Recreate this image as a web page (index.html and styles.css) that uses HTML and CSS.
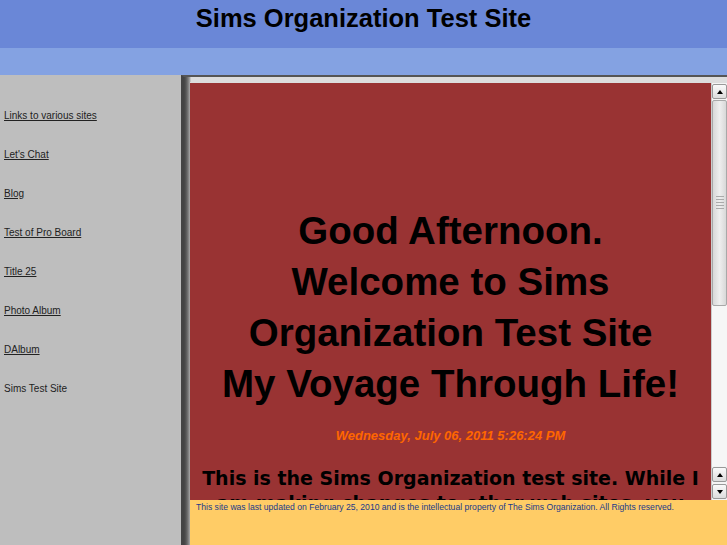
FILE: index.html
```html
<!DOCTYPE html>
<html>
<head>
<meta charset="utf-8">
<link rel="stylesheet" href="styles.css">
</head>
<body>
<div class="page">
  <header class="top">
    <h1 class="site-title">Sims Organization Test Site</h1>
  </header>
  <div class="band"></div>
  <div class="body-row">
    <nav class="side">
      <a class="nav-link" href="#">Links to various sites </a>
      <a class="nav-link" href="#">Let's Chat</a>
      <a class="nav-link" href="#">Blog</a>
      <a class="nav-link" href="#">Test of Pro Board</a>
      <a class="nav-link" href="#">Title 25</a>
      <a class="nav-link" href="#">Photo Album </a>
      <a class="nav-link" href="#">DAlbum</a>
      <span class="nav-link plain">Sims Test Site</span>
    </nav>
    <div class="frame">
      <div class="frame-inner">
        <div class="viewport">
          <main class="content">
            <div class="greeting">
              <p>Good Afternoon.</p>
              <p>Welcome to Sims</p>
              <p>Organization Test Site</p>
              <p>My Voyage Through Life!</p>
            </div>
            <p class="date">Wednesday, July 06, 2011 5:26:24 PM</p>
            <p class="intro">This is the Sims Organization test site. While I am making changes to other web sites, you may see some things here that are not yet finished.</p>
          </main>
          <div class="scrollbar">
            <div class="sb-btn"><span class="arr up"></span></div>
            <div class="sb-track">
              <div class="sb-thumb"><span class="grip"></span></div>
            </div>
            <div class="sb-btn"><span class="arr up"></span></div>
            <div class="sb-btn"><span class="arr down"></span></div>
          </div>
        </div>
        <footer class="foot">
          <p class="foot-text">This site was last updated on February 25, 2010 and is the intellectual property of The Sims Organization. All Rights reserved.</p>
        </footer>
      </div>
    </div>
  </div>
</div>
</body>
</html>
```
FILE: styles.css
```css
html, body {
  margin: 0;
  padding: 0;
  height: 100%;
  overflow: hidden;
}
body {
  font-family: "Liberation Sans", Arial, sans-serif;
  background: #bebebe;
}
.page {
  display: flex;
  flex-direction: column;
  height: 545px;
}
.top {
  height: 48px;
  background: #6a87d7;
  display: flex;
  justify-content: center;
}
.site-title {
  margin: 0;
  padding-top: 4px;
  font-size: 25.5px;
  line-height: 29px;
  font-weight: bold;
  color: #000;
}
.band {
  height: 27px;
  background: #84a2e2;
}
.body-row {
  flex: 1;
  display: flex;
  min-height: 0;
}
.side {
  width: 177px;
  padding: 35px 0 0 4px;
  background: #bebebe;
  display: flex;
  flex-direction: column;
  gap: 27px;
}
.nav-link {
  font-size: 10px;
  line-height: 12px;
  color: #222;
  text-decoration: underline;
}
.nav-link.plain {
  text-decoration: none;
}
.frame {
  flex: 1;
  display: flex;
  border-left: 3px solid #444;
  border-top: 2px solid #555;
  background: linear-gradient(90deg, #444 0, #555 2px, #777 4px, #aaa 6px, #ddd 7px);
  padding-left: 7px;
  padding-top: 5px;
  min-width: 0;
}
.frame-inner {
  flex: 1;
  display: flex;
  flex-direction: column;
  min-width: 0;
  border-top: 1px solid #ddd;
  margin-left: -1px;
}
.viewport {
  height: 417px;
  display: flex;
  background: #993333;
}
.content {
  flex: 1;
  overflow: hidden;
  text-align: center;
  color: #000;
  padding-top: 122px;
}
.greeting p {
  margin: 0;
  font-size: 38.5px;
  line-height: 51px;
  font-weight: bold;
  white-space: nowrap;
}
.date {
  margin: 19px 0 0;
  font-size: 13px;
  font-weight: bold;
  font-style: italic;
  color: #ff6600;
}
.intro {
  margin: 23px 12px 0;
  font-family: "DejaVu Sans", Verdana, sans-serif;
  font-size: 19px;
  line-height: 25px;
  font-weight: bold;
}
.scrollbar {
  width: 15px;
  display: flex;
  flex-direction: column;
  background: #f4f4f4;
  border-left: 1px solid #ccc;
}
.sb-btn {
  height: 13px;
  margin: 1px 0;
  border: 1px solid #999;
  border-radius: 2px;
  background: linear-gradient(#fafafa, #dcdcdc);
  display: flex;
  align-items: center;
  justify-content: center;
}
.arr {
  width: 0;
  height: 0;
  border-left: 3px solid transparent;
  border-right: 3px solid transparent;
}
.arr.up {
  border-bottom: 4px solid #000;
}
.arr.down {
  border-top: 4px solid #000;
}
.sb-track {
  flex: 1;
  display: flex;
  flex-direction: column;
  background: #f6f6f6;
}
.sb-thumb {
  height: 204px;
  border: 1px solid #a8a8a8;
  border-radius: 2px;
  background: linear-gradient(90deg, #d8d8d8, #eeeeee 50%, #d8d8d8);
  display: flex;
  align-items: center;
  justify-content: center;
}
.grip {
  width: 8px;
  height: 14px;
  background: repeating-linear-gradient(#aaa 0 1px, transparent 1px 3px);
}
.foot {
  flex: 1;
  background: #ffcc66;
}
.foot-text {
  margin: 2px 0 0 6px;
  font-size: 8.6px;
  line-height: 10px;
  color: #1a3a8a;
  white-space: nowrap;
}
```
